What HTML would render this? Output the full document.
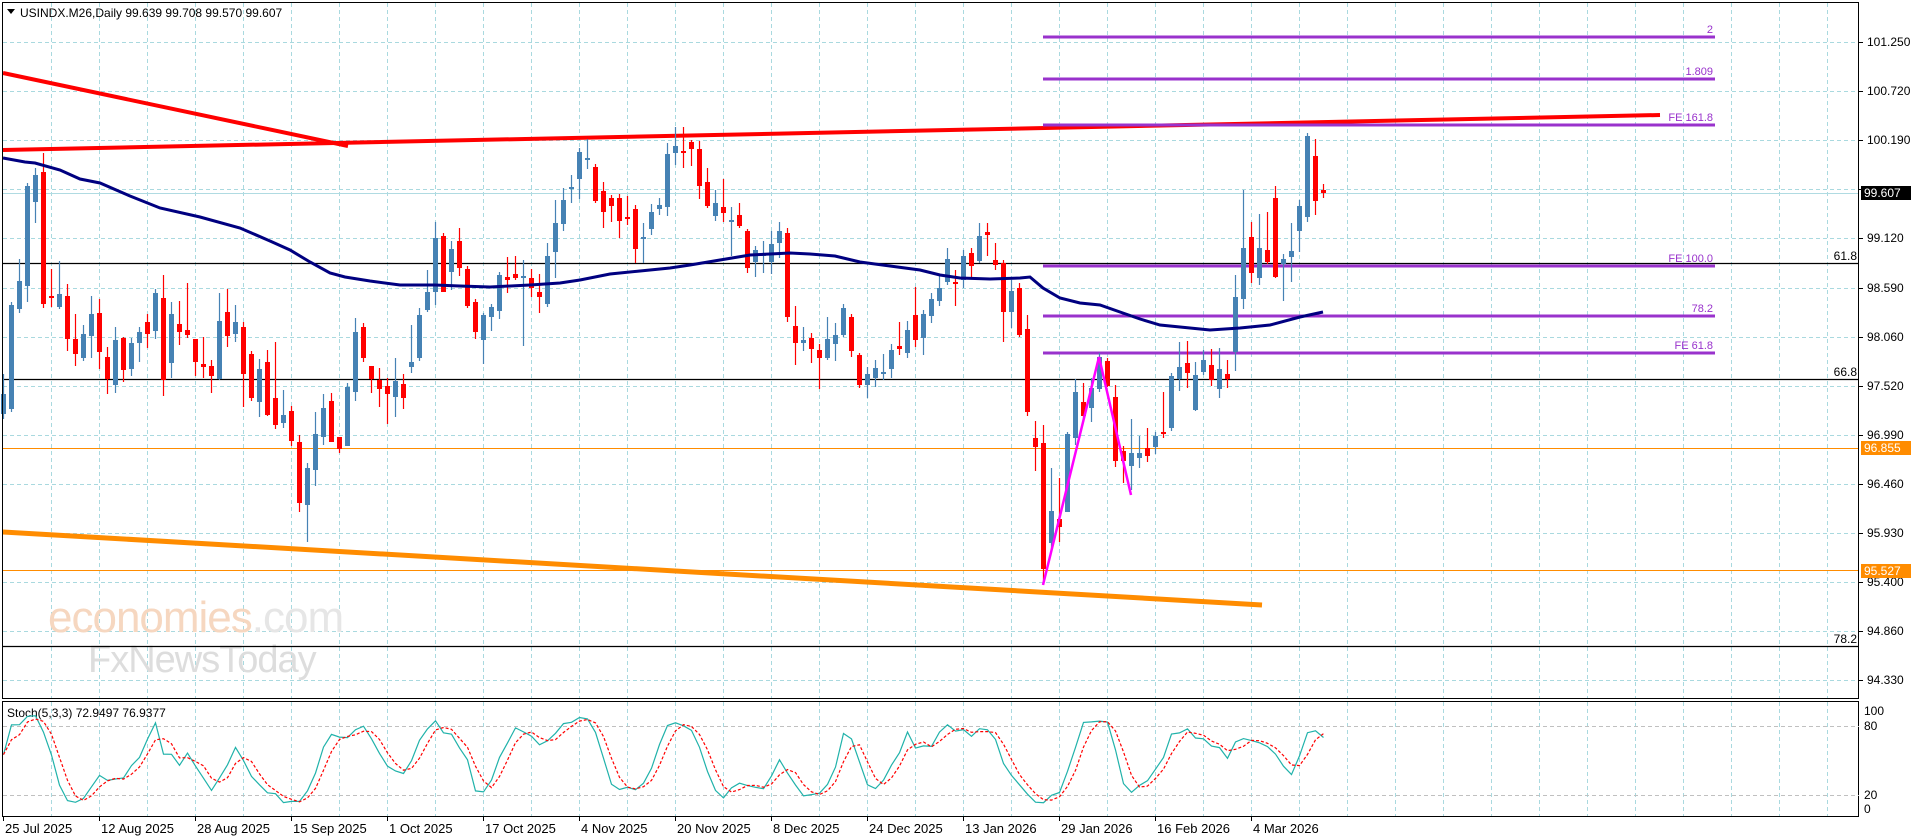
<!DOCTYPE html>
<html><head><meta charset="utf-8"><style>
html,body{margin:0;padding:0;background:#fff;}
svg{display:block;font-family:"Liberation Sans",sans-serif;}
</style></head><body>
<svg id="s" width="1916" height="840" viewBox="0 0 1916 840" xmlns="http://www.w3.org/2000/svg">
<rect width="1916" height="840" fill="#fff"/>
<g id="grid"></g>
<!-- watermark -->
<text x="48" y="632" font-size="44" fill="#f6d7c0" font-family="Liberation Sans,sans-serif" letter-spacing="-1">economies<tspan fill="#e6e6e6">.com</tspan></text>
<text x="88" y="672" font-size="38" fill="#dddddd" letter-spacing="-1">FxNewsToday</text>
<!-- horizontal levels -->
<line x1="3" y1="193.5" x2="1859" y2="193.5" stroke="#b0dbe2" stroke-width="1"/>
<line x1="3" y1="263.5" x2="1859" y2="263.5" stroke="#000" stroke-width="1.3"/>
<line x1="3" y1="379.5" x2="1859" y2="379.5" stroke="#000" stroke-width="1.3"/>
<line x1="3" y1="646.5" x2="1859" y2="646.5" stroke="#000" stroke-width="1.3"/>
<line x1="3" y1="448.5" x2="1859" y2="448.5" stroke="#ff8c00" stroke-width="1"/>
<line x1="3" y1="570.5" x2="1859" y2="570.5" stroke="#ff8c00" stroke-width="1"/>
<g font-size="12" fill="#000" text-anchor="end">
<text x="1857" y="260">61.8</text><text x="1857" y="376">66.8</text><text x="1857" y="643">78.2</text>
</g>
<!-- trendlines -->
<line x1="3" y1="73" x2="348" y2="146" stroke="#f00" stroke-width="4"/>
<line x1="3" y1="150" x2="1660" y2="115" stroke="#f00" stroke-width="4"/>
<line x1="3" y1="532" x2="1262" y2="605" stroke="#ff8c00" stroke-width="5"/>
<!-- purple fib -->
<g stroke="#9932cc" stroke-width="3">
<line x1="1043" y1="37" x2="1715" y2="37"/><line x1="1043" y1="79" x2="1715" y2="79"/>
<line x1="1043" y1="125" x2="1715" y2="125"/><line x1="1043" y1="266" x2="1715" y2="266"/>
<line x1="1043" y1="316" x2="1715" y2="316"/><line x1="1043" y1="353" x2="1715" y2="353"/>
</g>
<g font-size="11" fill="#9932cc" text-anchor="end">
<text x="1713" y="33">2</text><text x="1713" y="75">1.809</text><text x="1713" y="121">FE 161.8</text>
<text x="1713" y="262">FE 100.0</text><text x="1713" y="312">78.2</text><text x="1713" y="349">FE 61.8</text>
</g>
<g id="cand"></g>
<polyline id="ma" fill="none" stroke="#000080" stroke-width="3" points="3,158 25,162 35,163 60,170 80,179 100,183 130,196 160,208 200,217 240,228 270,241 290,250 310,262 330,273 345,277 370,281 400,285 435,285 460,286 490,287 530,285 560,283 580,280 610,274 640,271 670,268 690,265 720,260 750,255 770,254 790,253 810,254 835,256 860,262 890,266 920,270 940,275 960,278 990,279 1020,278 1030,277 1043,288 1060,298 1080,303 1100,305 1120,312 1140,319 1160,325 1180,327 1210,330 1240,328 1270,325 1300,317 1323,312"/>
<polyline fill="none" stroke="#ff00ff" stroke-width="2.5" points="1043,585 1099,357 1131,495"/>
<!-- frames -->
<rect x="2.5" y="2.5" width="1856" height="696" fill="none" stroke="#000" stroke-width="1"/>
<rect x="2.5" y="701.5" width="1856" height="115" fill="none" stroke="#000" stroke-width="1"/>
<!-- title -->
<path d="M7,9 L15,9 L11,14 Z" fill="#000"/>
<text x="20" y="17" font-size="12" fill="#000">USINDX.M26,Daily  99.639 99.708 99.570 99.607</text>
<text x="7" y="717" font-size="12" fill="#000">Stoch(5,3,3) 72.9497 76.9377</text>
<!-- stoch levels -->
<line x1="3" y1="726.5" x2="1859" y2="726.5" stroke="#c0c0c0" stroke-dasharray="4,3"/>
<line x1="3" y1="795.5" x2="1859" y2="795.5" stroke="#c0c0c0" stroke-dasharray="4,3"/>
<polyline id="k" fill="none" stroke="#20b2aa" stroke-width="1.2"/>
<polyline id="d" fill="none" stroke="#f00" stroke-width="1.2" stroke-dasharray="3,2"/>
<!-- price axis -->
<g id="axis" font-size="12" fill="#000"></g>
<rect x="1861" y="186" width="50" height="14" fill="#000"/>
<text x="1864" y="197" font-size="12" fill="#fff">99.607</text>
<rect x="1861" y="441" width="50" height="14" fill="#ff8c00"/>
<text x="1864" y="452" font-size="12" fill="#fff">96.855</text>
<rect x="1861" y="564" width="50" height="14" fill="#ff8c00"/>
<text x="1864" y="575" font-size="12" fill="#fff">95.527</text>
<g font-size="12" fill="#000">
<text x="1864" y="715">100</text><text x="1864" y="730">80</text><text x="1864" y="799">20</text><text x="1864" y="813">0</text>
</g>
<g id="dates" font-size="13" fill="#000"></g>
</svg>
<script>
var NS="http://www.w3.org/2000/svg";
function el(p,t,a,txt){var e=document.createElementNS(NS,t);for(var k in a)e.setAttribute(k,a[k]);if(txt!=null)e.textContent=txt;p.appendChild(e);return e;}
var g=document.getElementById('grid');
for(var x=51;x<1859;x+=48){el(g,'line',{x1:x+.5,y1:3,x2:x+.5,y2:698,stroke:'#a9d9df','stroke-dasharray':'4,3'});el(g,'line',{x1:x+.5,y1:702,x2:x+.5,y2:817,stroke:'#a9d9df','stroke-dasharray':'4,3'});}
var labs=["101.250","100.720","100.190","99.660","99.120","98.590","98.060","97.520","96.990","96.460","95.930","95.400","94.860","94.330"];
var ax=document.getElementById('axis');
for(var i=0;i<14;i++){var y=Math.round(42+i*49.1);el(g,'line',{x1:3,y1:y+.5,x2:1859,y2:y+.5,stroke:'#a9d9df','stroke-dasharray':'4,3'});el(ax,'line',{x1:1859,y1:y+.5,x2:1863,y2:y+.5,stroke:'#000'});if(i!=3)el(ax,'text',{x:1867,y:y+4},labs[i]);}
var D=[["b",394,414,374,419],["b",305,409,302,412],["b",281,309,259,313],["b",186,286,183,302],["b",175,202,168,223],["r",172,304,153,308],["r",296,296,269,307],["b",294,307,261,309],["r",296,339,284,351],["r",339,354,314,366],["b",334,358,325,361],["b",314,336,296,358],["r",313,352,299,369],["r",357,379,347,394],["b",340,385,327,393],["r",338,370,337,382],["b",343,369,338,376],["b",332,343,327,362],["r",322,334,314,348],["b",293,331,289,339],["r",298,380,275,396],["b",314,363,302,378],["r",324,332,301,345],["r",330,335,283,338],["r",339,362,339,376],["r",364,367,337,378],["r",366,376,360,393],["b",321,379,293,380],["r",312,336,289,347],["b",322,334,305,342],["r",327,374,322,407],["r",354,398,351,401],["b",369,402,359,417],["r",362,415,350,416],["r",398,425,342,429],["b",415,423,390,428],["r",411,441,406,446],["r",442,503,435,512],["b",468,505,463,542],["b",434,470,412,486],["b",408,437,394,445],["r",401,442,393,442],["r",437,449,437,453],["b",387,446,383,446],["b",332,392,318,401],["r",327,358,323,362],["r",366,379,366,393],["r",380,389,368,407],["r",386,394,378,424],["b",381,397,358,417],["r",384,398,374,409],["b",362,367,325,373],["b",315,358,308,361],["b",292,310,270,312],["b",238,292,222,305],["r",236,292,233,292],["b",249,272,241,290],["r",241,268,228,276],["r",269,306,266,308],["r",302,332,299,339],["b",315,340,313,364],["b",307,317,304,331],["b",275,311,272,319],["r",277,280,257,293],["r",274,278,256,280],["b",276,278,260,346],["r",278,288,269,297],["r",292,297,274,313],["b",256,304,243,307],["b",223,252,200,278],
["b",200,224,188,231],["b",187,189,175,203],["b",152,179,148,199],["b",158,160,139,169],["r",167,201,164,203],["r",191,212,182,228],["r",198,206,195,222],["r",198,221,194,238],["r",217,219,196,225],["r",209,249,205,263],["b",237,239,223,263],["b",212,229,204,235],["b",205,209,198,215],["b",154,207,143,216],["b",146,153,127,165],["r",151,152,127,168],["r",142,149,140,166],["r",149,186,141,199],["r",182,206,168,208],["b",203,216,190,221],["r",207,213,179,222],["b",220,222,207,256],["r",215,226,203,228],["r",231,268,229,273],["b",250,262,246,277],["b",254,256,241,273],["b",244,262,231,274],["b",231,243,222,258],["r",233,317,228,322],["r",326,343,306,365],["b",340,343,327,351],["r",338,349,333,363],["r",350,358,344,389],["b",339,358,317,360],["b",335,344,323,361],["b",308,335,304,337],["r",317,351,314,357],["r",355,385,353,388],["b",374,385,367,398],["b",368,378,360,387],["b",372,374,354,380],["b",350,369,344,378],["r",346,349,322,355],["b",330,353,321,358],["r",315,340,287,347],["b",314,338,310,355],["b",299,316,293,323],["b",288,301,274,306],["b",259,282,248,285],["r",282,284,270,306],["b",256,280,250,288],["r",253,266,248,278],["b",236,261,223,263],["r",232,235,223,256],["r",260,265,243,270],
["r",263,312,260,342],["b",291,312,280,328],["r",288,335,283,337],["r",329,412,315,416],["r",438,447,421,471],["r",443,569,425,585],["b",511,543,468,550],["r",519,527,478,542],["b",434,512,432,512],["b",392,438,379,445],["r",402,416,383,422],["b",388,408,378,422],["b",357,389,353,392],["r",361,386,358,387],["r",397,461,385,467],["r",451,461,446,483],["b",453,466,419,490],["b",453,458,436,468],["r",448,456,428,462],["b",436,447,432,454],["r",432,434,392,438],["b",376,428,373,431],["b",367,379,342,391],["r",363,373,341,388],["b",375,410,362,411],["b",360,372,350,375],["r",365,380,349,386],["b",369,389,348,398],["r",374,379,360,388],["b",297,352,275,371],["b",248,299,190,309],["r",237,273,222,283],["b",248,278,214,285],["r",250,262,212,264],["r",198,277,186,278],["b",259,264,254,301],["b",251,257,223,282],["b",206,231,200,252],["b",136,217,133,222],["r",156,201,139,215],["r",190,193,184,198]];
var cg=document.getElementById('cand');
var C=[],H=[],L=[];
D.forEach(function(c,i){var x=3+8*i;var col=c[0]=="b"?"#4682b4":"#ff0000";
el(cg,'line',{x1:x+.5,y1:c[3],x2:x+.5,y2:c[4],stroke:col,'stroke-width':1.2});
var h=Math.max(c[2]-c[1],2);el(cg,'rect',{x:x-2,y:c[1],width:5,height:h,fill:col});
C.push(c[0]=="b"?c[1]:c[2]);H.push(c[3]);L.push(c[4]);});
// stochastic (y pixels: larger = lower price)
var K=[],Dd=[];var n=D.length;var num=[],den=[];
for(var i=0;i<n;i++){var mx=-1e9,mn=1e9;for(var j=Math.max(0,i-4);j<=i;j++){mx=Math.max(mx,L[j]);mn=Math.min(mn,H[j]);}num.push(mx-C[i]);den.push(mx-mn);}
for(var i=0;i<n;i++){var a=0,b=0;for(var j=Math.max(0,i-2);j<=i;j++){a+=num[j];b+=den[j];}K.push(b?100*a/b:50);}
for(var i=0;i<n;i++){var s=0,c=0;for(var j=Math.max(0,i-2);j<=i;j++){s+=K[j];c++;}Dd.push(s/c);}
function pts(A){return A.map(function(v,i){return (3+8*i+.5)+","+(809-v*0.98).toFixed(1);}).join(" ");}
document.getElementById('k').setAttribute('points',pts(K));
document.getElementById('d').setAttribute('points',pts(Dd));
var dg=document.getElementById('dates');
var dl=["25 Jul 2025","12 Aug 2025","28 Aug 2025","15 Sep 2025","1 Oct 2025","17 Oct 2025","4 Nov 2025","20 Nov 2025","8 Dec 2025","24 Dec 2025","13 Jan 2026","29 Jan 2026","16 Feb 2026","4 Mar 2026"];
dl.forEach(function(t,i){var x=3+96*i;el(dg,'line',{x1:x+.5,y1:817,x2:x+.5,y2:821,stroke:'#000'});el(dg,'text',{x:x+2,y:833},t);});
</script>
</body></html>
